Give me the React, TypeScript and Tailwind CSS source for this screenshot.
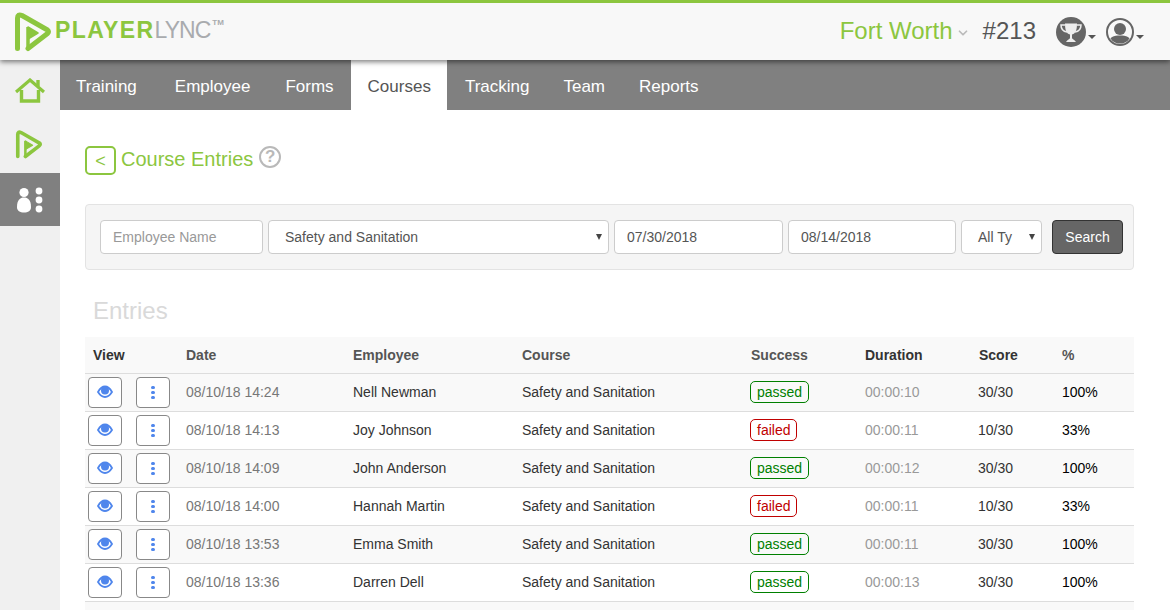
import { ChevronDown } from "lucide-react";

const FONT = "font-['Liberation_Sans',Arial,sans-serif]";
const ROW_GRID = "grid grid-cols-[93px_167px_169px_229px_114px_114px_83px_80px]";

const NAV_ITEMS = [
  { label: "Training", className: "pr-[20.5px] pl-[16px]" },
  { label: "Employee", className: "px-[17.5px]" },
  { label: "Forms", className: "px-[17.5px]" },
  { label: "Courses", className: "bg-white px-[16.5px] text-[#555]" },
  { label: "Tracking", className: "pr-[16.5px] pl-[17.5px]" },
  { label: "Team", className: "pr-[16.5px] pl-[17.5px]" },
  { label: "Reports", className: "px-[17.5px]" },
];

const ENTRIES = [
  { date: "08/10/18 14:24", name: "Nell Newman", passed: true, duration: "00:00:10", score: "30/30", pct: "100%" },
  { date: "08/10/18 14:13", name: "Joy Johnson", passed: false, duration: "00:00:11", score: "10/30", pct: "33%" },
  { date: "08/10/18 14:09", name: "John Anderson", passed: true, duration: "00:00:12", score: "30/30", pct: "100%" },
  { date: "08/10/18 14:00", name: "Hannah Martin", passed: false, duration: "00:00:11", score: "10/30", pct: "33%" },
  { date: "08/10/18 13:53", name: "Emma Smith", passed: true, duration: "00:00:11", score: "30/30", pct: "100%" },
  { date: "08/10/18 13:36", name: "Darren Dell", passed: true, duration: "00:00:13", score: "30/30", pct: "100%" },
];

function PlayMark({ className }: { className?: string }) {
  return (
    <svg viewBox="0 0 38 40" className={className} fill="none" stroke="#8cc63f" strokeLinejoin="round" strokeLinecap="round">
      <path d="M3.5 36.5 V6 Q3.5 1.5 8 3.5 L33.5 18 Q35.5 19.5 33.5 21.5 L14 36.5" strokeWidth="5" />
      <path d="M14 36 V15" strokeWidth="3.5" strokeLinecap="butt" />
      <path d="M14 15 L24 21 L14 27 Z" fill="#8cc63f" strokeWidth="1.5" />
    </svg>
  );
}

function HomeIcon() {
  return (
    <svg viewBox="0 0 30 25" className="h-[25px] w-[30px]" fill="none" stroke="#8cc63f">
      <path d="M1 14 L15 2 L29 14" strokeWidth="3.2" />
      <path d="M6.5 12 V23 H23.5 V12" strokeWidth="3.4" />
      <path d="M23 2 V8" strokeWidth="3.4" />
    </svg>
  );
}

function PeopleIcon() {
  return (
    <svg viewBox="0 0 28 26" className="h-[26px] w-[28px]" fill="white">
      <circle cx="8" cy="5.5" r="4.6" />
      <path d="M1 20 C1 13 4 10.5 8 10.5 C12 10.5 15 13 15 20 C15 24 12 25.5 8 25.5 C4 25.5 1 24 1 20 Z" />
      <circle cx="23" cy="4" r="3.4" />
      <circle cx="23" cy="13" r="3.4" />
      <circle cx="23" cy="22" r="3.4" />
    </svg>
  );
}

function TrophyIcon() {
  return (
    <svg viewBox="0 0 30 30" className="h-[30px] w-[30px]">
      <circle cx="15" cy="15" r="15" fill="#666" />
      <path d="M9 6.5 H21 C21 12 20 16.5 16 17.5 V21 C16 22 18.5 22.5 20 25 H10 C11.5 22.5 14 22 14 21 V17.5 C10 16.5 9 12 9 6.5 Z" fill="#eee" />
      <path d="M9 8 H5 C5 12 7 14.5 11 15 M21 8 H25 C25 12 23 14.5 19 15" fill="none" stroke="#eee" strokeWidth="1.5" />
    </svg>
  );
}

function UserIcon() {
  return (
    <svg viewBox="0 0 28 28" className="h-[28px] w-[28px]">
      <defs>
        <clipPath id="userClip">
          <circle cx="14" cy="14" r="11.5" />
        </clipPath>
      </defs>
      <circle cx="14" cy="14" r="13" fill="#f8f8f8" stroke="#666" strokeWidth="2" />
      <circle cx="14" cy="11" r="6" fill="#666" />
      <path d="M2 27 C2 19 8 17.5 14 17.5 C20 17.5 26 19 26 27 Z" fill="#666" clipPath="url(#userClip)" />
    </svg>
  );
}

function EyeIcon() {
  return (
    <svg viewBox="0 0 16 13" className="h-[13px] w-[16px]" fill="none">
      <path d="M1 7 C3 3.5 5.5 1.5 8 1.5 C10.5 1.5 13 3.5 15 7 C13 10.2 10.5 12 8 12 C5.5 12 3 10.2 1 7 Z" stroke="#4f86ec" strokeWidth="1.8" />
      <circle cx="8" cy="5.5" r="4" fill="#4f86ec" />
    </svg>
  );
}

function Caret() {
  return <span className="mt-[11px] ml-[2px] h-0 w-0 border-x-[4px] border-t-[4px] border-x-transparent border-t-[#555]" />;
}

function Header() {
  return (
    <header className="relative z-10 flex h-[60px] items-center justify-between border-t-[3px] border-[#8cc63f] bg-[#f8f8f8] pr-[26px] pl-[14px] shadow-[0_2px_5px_rgba(0,0,0,0.5)]">
      <div className="flex items-center">
        <PlayMark className="h-[40px] w-[38px]" />
        <span className="relative -top-[1px] ml-[3px] flex items-start text-[23px] leading-none">
          <span className="font-bold tracking-[1.4px] text-[#8cc63f]">PLAYER</span>
          <span className="tracking-[-1px] text-[#a9abae]">LYNC</span>
          <span className="ml-[2px] text-[8px] font-bold text-[#a9abae]">TM</span>
        </span>
      </div>
      <div className="flex items-center">
        <span className="relative -top-[1px] text-[24px] leading-none text-[#8cc63f]">Fort Worth</span>
        <ChevronDown className="mt-[3px] ml-[3px] h-[14px] w-[14px] text-[#bbb]" strokeWidth={3} />
        <span className="relative -top-[1px] ml-[13px] text-[24px] leading-none text-[#555]">#213</span>
        <span className="ml-[20px] flex items-center">
          <TrophyIcon />
          <Caret />
        </span>
        <span className="ml-[10px] flex items-center">
          <UserIcon />
          <Caret />
        </span>
      </div>
    </header>
  );
}

function Sidebar() {
  return (
    <aside className="flex w-[60px] shrink-0 flex-col bg-[#f0f0f0]">
      <div className="flex h-[60px] items-center justify-center pt-[1px]">
        <HomeIcon />
      </div>
      <div className="flex h-[53px] items-center justify-center pr-[2px] pb-[4px]">
        <PlayMark className="h-[29px] w-[28px]" />
      </div>
      <div className="flex h-[53px] items-center justify-center bg-[#808080]">
        <PeopleIcon />
      </div>
    </aside>
  );
}

function TopNav() {
  return (
    <nav className="flex h-[50px] bg-[#808080] text-[17px] text-white">
      {NAV_ITEMS.map((item) => (
        <a key={item.label} className={`flex items-center pt-[3px] ${item.className}`}>
          {item.label}
        </a>
      ))}
    </nav>
  );
}

function SearchBar() {
  const field = "flex h-[34px] items-center rounded-[4px] border border-[#ccc] bg-white text-[14px] text-[#555]";
  return (
    <div className="flex h-[66px] items-center rounded-[4px] border border-[#e3e3e3] bg-[#f5f5f5] pl-[14px]">
      <div className={`${field} w-[163px] pl-[12px] text-[#999]`}>Employee Name</div>
      <div className={`${field} relative ml-[5px] w-[341px] pl-[16px]`}>
        Safety and Sanitation
        <span className="absolute top-[13px] right-[6px] h-0 w-0 border-x-[3.5px] border-t-[6px] border-x-transparent border-t-[#444]" />
      </div>
      <div className={`${field} ml-[5px] w-[169px] pl-[12px]`}>07/30/2018</div>
      <div className={`${field} ml-[5px] w-[168px] pl-[12px]`}>08/14/2018</div>
      <div className={`${field} relative ml-[5px] w-[81px] pl-[16px]`}>
        All Ty
        <span className="absolute top-[13px] right-[6px] h-0 w-0 border-x-[3.5px] border-t-[6px] border-x-transparent border-t-[#444]" />
      </div>
      <button className="ml-[10px] h-[34px] w-[71px] rounded-[4px] border border-[#333] bg-[#666] text-[14px] text-white">
        Search
      </button>
    </div>
  );
}

function StatusBadge({ passed }: { passed: boolean }) {
  return (
    <span
      className={
        passed
          ? "-mt-[1px] block w-fit rounded-[5px] border border-[#008000] px-[6px] leading-[20px] text-[#008000]"
          : "-mt-[1px] block w-fit rounded-[5px] border border-[#c00000] px-[6px] leading-[20px] text-[#c00000]"
      }
    >
      {passed ? "passed" : "failed"}
    </span>
  );
}

function EntriesTable() {
  return (
    <div className="w-[1049px] text-[14px]">
      <div className={`${ROW_GRID} h-[37px] items-center border-b border-[#ddd] bg-[#f9f9f9] font-bold text-[#555]`}>
        <span className="pl-[8px] text-[#333]">View</span>
        <span className="pl-[8px]">Date</span>
        <span className="pl-[8px]">Employee</span>
        <span className="pl-[8px]">Course</span>
        <span className="pl-[8px]">Success</span>
        <span className="pl-[8px] text-[#333]">Duration</span>
        <span className="pl-[8px] text-[#333]">Score</span>
        <span className="pl-[8px]">%</span>
      </div>
      {ENTRIES.map((entry, i) => (
        <div
          key={entry.date}
          className={`${ROW_GRID} h-[38px] items-center border-b border-[#ddd] ${i % 2 === 0 ? "bg-[#f9f9f9]" : "bg-white"}`}
        >
          <div className="flex items-center pl-[3px]">
            <button className="flex h-[31px] w-[34px] items-center justify-center rounded-[4px] border border-[#888] bg-white pb-[2px]">
              <EyeIcon />
            </button>
            <button className="ml-[14px] flex h-[31px] w-[34px] flex-col items-center justify-center gap-[1.5px] rounded-[4px] border border-[#888] bg-white">
              <span className="h-[3.5px] w-[3.5px] rounded-full bg-[#4f86ec]" />
              <span className="h-[3.5px] w-[3.5px] rounded-full bg-[#4f86ec]" />
              <span className="h-[3.5px] w-[3.5px] rounded-full bg-[#4f86ec]" />
            </button>
          </div>
          <span className="pl-[8px] text-[#777]">{entry.date}</span>
          <span className="pl-[8px] text-[#333]">{entry.name}</span>
          <span className="pl-[8px] text-[#333]">Safety and Sanitation</span>
          <span className="pl-[7px]">
            <StatusBadge passed={entry.passed} />
          </span>
          <span className="pl-[8px] text-[#999]">{entry.duration}</span>
          <span className="pl-[7px] text-[#333]">{entry.score}</span>
          <span className="pl-[8px] text-black">{entry.pct}</span>
        </div>
      ))}
      <div className="h-[20px] bg-[#f9f9f9]" />
    </div>
  );
}

export default function App() {
  return (
    <div className={`${FONT} h-[610px] w-[1170px] overflow-hidden bg-white`}>
      <Header />
      <div className="flex h-[550px]">
        <Sidebar />
        <main className="min-w-0 flex-1">
          <TopNav />
          <div className="pl-[25px]">
            <div className="flex h-[94px] items-center pt-[4px]">
              <button className="mt-[2px] h-[29px] w-[31px] rounded-[5px] border-2 border-[#8cc63f] pb-[3px] text-[18px] text-[#8cc63f]">
                &lt;
              </button>
              <h1 className="ml-[5px] text-[20px] text-[#8cc63f]">Course Entries</h1>
              <span className="relative -top-[2px] ml-[6px] flex h-[22px] w-[22px] items-center justify-center rounded-full border-[2px] border-[#b9b9b9] text-[17px] font-bold text-[#b9b9b9]">
                ?
              </span>
            </div>
            <div className="mr-[36px]">
              <SearchBar />
            </div>
            <h2 className="mt-[26px] h-[41px] pl-[8px] text-[24px] leading-[30px] text-[#d9d9d9]">Entries</h2>
            <EntriesTable />
          </div>
        </main>
      </div>
    </div>
  );
}
